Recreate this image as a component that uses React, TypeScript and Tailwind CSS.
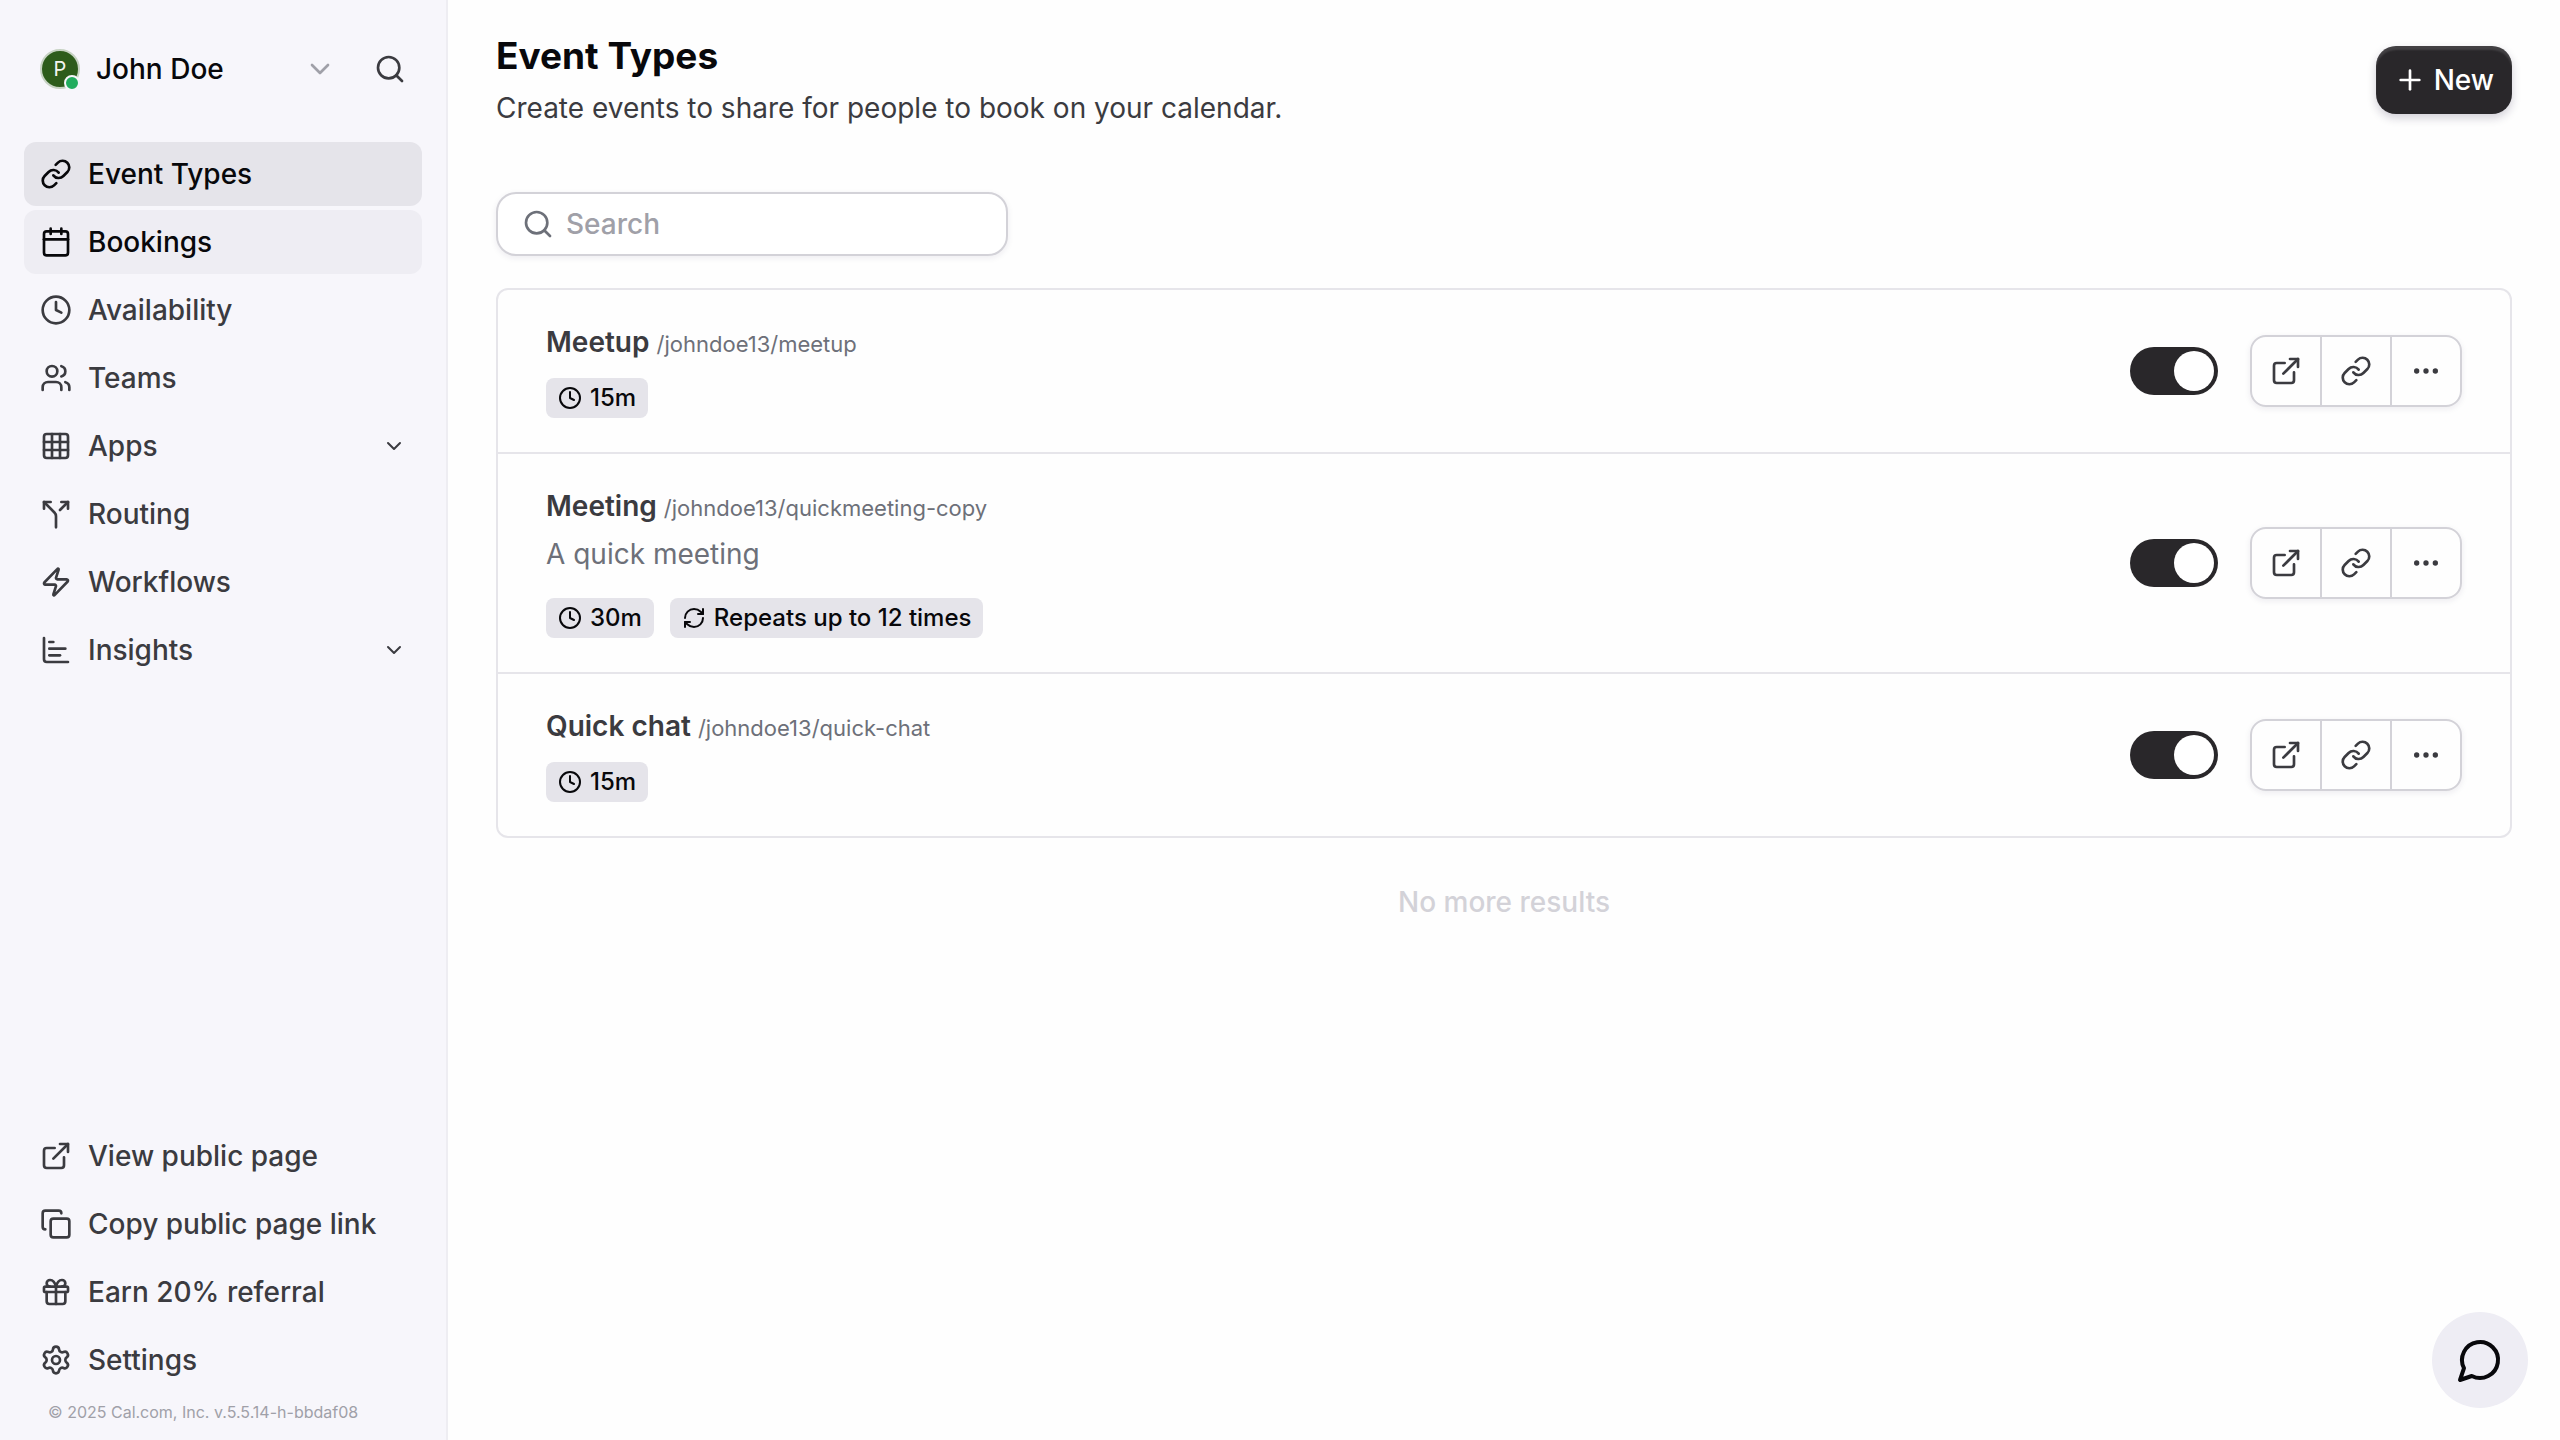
import { useState } from "react";
import type { ReactNode } from "react";
import {
  Calendar,
  ChartBar,
  ChevronDown,
  Clock,
  Copy,
  Ellipsis,
  ExternalLink,
  Gift,
  Grid3x3,
  Link as LinkIcon,
  Plus,
  RefreshCw,
  Search,
  Settings,
  Split,
  Users,
  Zap,
} from "lucide-react";
import type { LucideIcon } from "lucide-react";

type NavItem = {
  label: string;
  icon: LucideIcon;
  state?: "active" | "hover";
  expandable?: boolean;
};

const mainNav: NavItem[] = [
  { label: "Event Types", icon: LinkIcon, state: "active" },
  { label: "Bookings", icon: Calendar, state: "hover" },
  { label: "Availability", icon: Clock },
  { label: "Teams", icon: Users },
  { label: "Apps", icon: Grid3x3, expandable: true },
  { label: "Routing", icon: Split },
  { label: "Workflows", icon: Zap },
  { label: "Insights", icon: ChartBar, expandable: true },
];

const footerNav: NavItem[] = [
  { label: "View public page", icon: ExternalLink },
  { label: "Copy public page link", icon: Copy },
  { label: "Earn 20% referral", icon: Gift },
  { label: "Settings", icon: Settings },
];

type EventType = {
  title: string;
  slug: string;
  description?: string;
  duration: string;
  repeats?: string;
};

const eventTypes: EventType[] = [
  { title: "Meetup", slug: "/johndoe13/meetup", duration: "15m" },
  {
    title: "Meeting",
    slug: "/johndoe13/quickmeeting-copy",
    description: "A quick meeting",
    duration: "30m",
    repeats: "Repeats up to 12 times",
  },
  { title: "Quick chat", slug: "/johndoe13/quick-chat", duration: "15m" },
];

const navStateClass = {
  active: "bg-[#e5e4ea] text-[#08080b]",
  hover: "bg-[#eeedf3] text-[#08080b]",
  idle: "text-[#3b3b40]",
};

function NavLink({ item }: { item: NavItem }) {
  const Icon = item.icon;
  return (
    <li>
      <a
        href="#"
        aria-current={item.state === "active" ? "page" : undefined}
        className={`flex h-16 items-center gap-4 rounded-xl px-4 text-[28px] font-medium ${navStateClass[item.state ?? "idle"]}`}
      >
        <Icon className="size-8 shrink-0" strokeWidth={2} />
        <span className="flex-1 whitespace-nowrap">{item.label}</span>
        {item.expandable && <ChevronDown className="size-6" strokeWidth={2} />}
      </a>
    </li>
  );
}

function Sidebar() {
  return (
    <aside className="flex w-[448px] shrink-0 flex-col border-r-2 border-[#eeedf2] bg-[#f7f6fb] px-6">
      <div className="mt-10 flex h-[58px] items-center px-4">
        <button type="button" className="flex flex-1 items-center">
          <span className="relative flex size-10 items-center justify-center rounded-full border-2 border-[#c6d2c2] bg-[#2d5c1b] text-[20px] text-[#f3f5f0]">
            P
            <span className="absolute -right-0.5 -bottom-1 size-4 rounded-full border-2 border-[#f7f6fb] bg-[#22ac5e]" />
          </span>
          <span className="ml-4 flex-1 text-left text-[28px] font-medium text-[#08080b]">
            John Doe
          </span>
          <ChevronDown className="mr-[38px] size-8 text-[#a0a0a8]" strokeWidth={2} />
        </button>
        <button type="button" aria-label="Search" className="text-[#3b3b40]">
          <Search className="size-8" strokeWidth={2} />
        </button>
      </div>
      <nav aria-label="Main" className="mt-11">
        <ul className="flex flex-col gap-1">
          {mainNav.map((item) => (
            <NavLink key={item.label} item={item} />
          ))}
        </ul>
      </nav>
      <div className="mt-auto pb-3">
        <ul className="flex flex-col gap-1">
          {footerNav.map((item) => (
            <NavLink key={item.label} item={item} />
          ))}
        </ul>
        <small className="mt-1 block px-6 text-[16px] leading-8 text-[#a0a0a8]">
          © 2025 Cal.com, Inc. v.5.5.14-h-bbdaf08
        </small>
      </div>
    </aside>
  );
}

function Badge({ icon: Icon, children }: { icon: LucideIcon; children: ReactNode }) {
  return (
    <span className="flex h-10 items-center gap-2 rounded-lg bg-[#e5e4ea] px-3 text-[24px] font-medium text-[#08080b]">
      <Icon className="size-6" strokeWidth={2} />
      {children}
    </span>
  );
}

function Toggle({ label }: { label: string }) {
  const [on, setOn] = useState(true);
  return (
    <label className="relative flex cursor-pointer">
      <input
        type="checkbox"
        role="switch"
        aria-label={label}
        checked={on}
        onChange={() => setOn(!on)}
        className="peer sr-only"
      />
      <span className="flex h-12 w-[88px] justify-start rounded-full bg-[#d3d2d8] p-1 peer-checked:justify-end peer-checked:bg-[#29272a]">
        <span className="size-10 rounded-full bg-white" />
      </span>
    </label>
  );
}

const actions: { label: string; icon: LucideIcon }[] = [
  { label: "Preview", icon: ExternalLink },
  { label: "Copy link", icon: LinkIcon },
  { label: "More options", icon: Ellipsis },
];

function EventRow({ event }: { event: EventType }) {
  return (
    <li className="flex items-center px-12">
      <div className="min-w-0 flex-1 pt-8 pb-[34px]">
        <h2 className="text-[28px] leading-10 font-semibold text-[#3b3b40]">
          {event.title}{" "}
          <small className="text-[22px] leading-none font-normal text-[#6d7079]">
            {event.slug}
          </small>
        </h2>
        {event.description && (
          <p className="mt-2 mb-6 text-[28px] leading-10 text-[#6d7079]">{event.description}</p>
        )}
        <div className="mt-4 flex gap-4">
          <Badge icon={Clock}>{event.duration}</Badge>
          {event.repeats && <Badge icon={RefreshCw}>{event.repeats}</Badge>}
        </div>
      </div>
      <div className="flex items-center gap-8">
        <Toggle label={`Show ${event.title} on profile`} />
        <div className="flex divide-x-2 divide-[#d3d2d8] rounded-2xl border-2 border-[#d3d2d8] shadow-[0_2px_6px_rgba(40,30,80,0.08)]">
          {actions.map(({ label, icon: Icon }) => (
            <button
              key={label}
              type="button"
              aria-label={label}
              className="box-content flex h-[68px] w-[68px] items-center justify-center text-[#3b3b40]"
            >
              <Icon className="size-8" strokeWidth={2} />
            </button>
          ))}
        </div>
      </div>
    </li>
  );
}

export default function App() {
  return (
    <div className="flex min-h-screen bg-[#fefefe] font-['Inter',sans-serif]">
      <Sidebar />
      <main className="min-w-0 flex-1 px-12 pt-8">
        <header className="flex items-start justify-between">
          <div>
            <h1 className="text-[37px] leading-[48px] font-bold text-[#08080b]">Event Types</h1>
            <p className="mt-2 text-[28px] leading-10 text-[#3b3b40]">
              Create events to share for people to book on your calendar.
            </p>
          </div>
          <button
            type="button"
            className="mt-[14px] flex h-[68px] items-center gap-2 rounded-[20px] bg-[#29272a] px-[18px] text-[28px] font-medium text-white shadow-[inset_0_4px_2px_rgba(255,255,255,0.12),0_4px_10px_rgba(30,20,60,0.2)]"
          >
            <Plus className="size-8" strokeWidth={2} />
            New
          </button>
        </header>
        <label className="mt-16 flex h-16 w-[512px] items-center gap-3 rounded-[20px] border-2 border-[#d3d2d8] bg-white px-6 shadow-[0_2px_6px_rgba(40,30,80,0.08)]">
          <Search className="size-8 text-[#6d7079]" strokeWidth={2} />
          <input
            type="search"
            aria-label="Search event types"
            placeholder="Search"
            className="min-w-0 flex-1 text-[28px] font-medium outline-none placeholder:text-[#a0a0a8]"
          />
        </label>
        <ul className="mt-8 divide-y-2 divide-[#e6e5ea] rounded-xl border-2 border-[#e6e5ea]">
          {eventTypes.map((event) => (
            <EventRow key={event.title} event={event} />
          ))}
        </ul>
        <p className="mt-11 text-center text-[28px] leading-10 font-medium text-[#d3d2d8]">
          No more results
        </p>
      </main>
      <button
        type="button"
        aria-label="Open chat"
        className="fixed right-8 bottom-8 flex size-24 items-center justify-center rounded-full bg-[#eeedf4] text-[#08080b]"
      >
        <svg
          viewBox="0 0 24 24"
          className="size-12"
          fill="none"
          stroke="currentColor"
          strokeWidth="2"
          strokeLinecap="round"
          strokeLinejoin="round"
          aria-hidden="true"
        >
          <path d="M7.9 20A9 9 0 1 0 4 16.1L2 22Z" />
        </svg>
      </button>
    </div>
  );
}
